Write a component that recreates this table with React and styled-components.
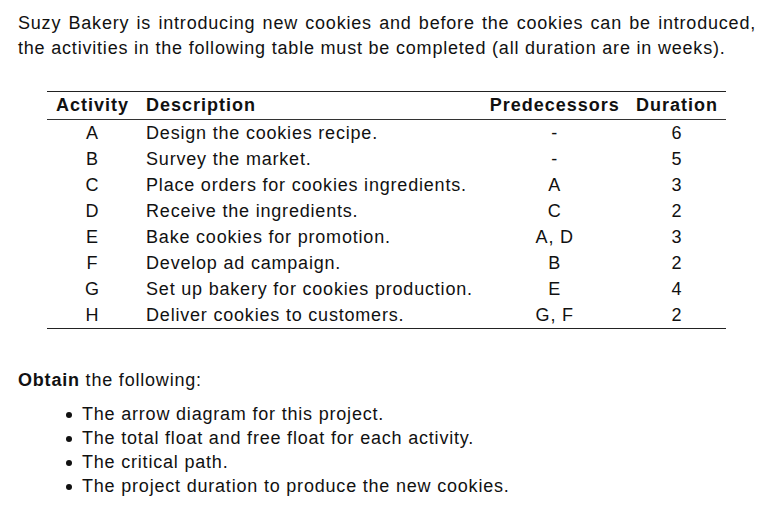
import React from 'react';
import styled, { createGlobalStyle } from 'styled-components';

const GlobalStyle = createGlobalStyle`
  body {
    margin: 0;
    background: #fff;
    color: #111;
    font-family: 'Liberation Sans', Arial, sans-serif;
  }
`;

const Page = styled.div`
  width: 766px;
  padding: 11px 0 0 18px;
  box-sizing: border-box;
  font-size: 18px;
  letter-spacing: 0.8px;
`;

const Intro = styled.div`
  width: 738px;
  line-height: 25px;
`;

const Line = styled.div`
  text-align: ${(p) => (p.$justify ? 'justify' : 'left')};
  text-align-last: ${(p) => (p.$justify ? 'justify' : 'left')};
`;

const Table = styled.table`
  margin: 30px 0 0 29px;
  width: 679px;
  border-collapse: collapse;
  border-top: 1.5px solid #222;
  border-bottom: 1.5px solid #222;
`;

const Head = styled.th`
  height: 27px;
  padding: 0 ${(p) => (p.$pad ? p.$pad : 8)}px;
  text-align: ${(p) => p.$align || 'left'};
  font-weight: bold;
  letter-spacing: 1px;
  border-bottom: 1px solid #333;
  white-space: nowrap;
`;

const Cell = styled.td`
  height: 26px;
  padding: 0 8px;
  text-align: ${(p) => p.$align || 'center'};
  white-space: nowrap;
`;

const Obtain = styled.p`
  margin: 39px 0 0 0;
  line-height: 25px;
`;

const List = styled.ul`
  margin: 9px 0 0 0;
  padding-left: 64px;
  list-style: none;
`;

const Item = styled.li`
  position: relative;
  line-height: 24px;
  &::before {
    content: '';
    position: absolute;
    left: -16px;
    top: 10px;
    width: 6px;
    height: 6px;
    border-radius: 50%;
    background: #111;
  }
`;

const rows = [
  ['A', 'Design the cookies recipe.', '-', 6],
  ['B', 'Survey the market.', '-', 5],
  ['C', 'Place orders for cookies ingredients.', 'A', 3],
  ['D', 'Receive the ingredients.', 'C', 2],
  ['E', 'Bake cookies for promotion.', 'A, D', 3],
  ['F', 'Develop ad campaign.', 'B', 2],
  ['G', 'Set up bakery for cookies production.', 'E', 4],
  ['H', 'Deliver cookies to customers.', 'G, F', 2],
];

export default function App() {
  return (
    <Page>
      <GlobalStyle />
      <Intro>
        <Line $justify>
          Suzy Bakery is introducing new cookies and before the cookies can be introduced,
        </Line>
        <Line>
          the activities in the following table must be completed (all duration are in weeks).
        </Line>
      </Intro>
      <Table>
        <colgroup>
          <col style={{ width: 90 }} />
          <col style={{ width: 344 }} />
          <col style={{ width: 147 }} />
          <col style={{ width: 98 }} />
        </colgroup>
        <thead>
          <tr>
            <Head $pad={9}>Activity</Head>
            <Head>Description</Head>
            <Head $align="center">Predecessors</Head>
            <Head $align="center">Duration</Head>
          </tr>
        </thead>
        <tbody>
          {rows.map(([act, desc, pred, dur]) => (
            <tr key={act}>
              <Cell>{act}</Cell>
              <Cell $align="left">{desc}</Cell>
              <Cell>{pred}</Cell>
              <Cell>{dur}</Cell>
            </tr>
          ))}
        </tbody>
      </Table>
      <Obtain>
        <b>Obtain</b> the following:
      </Obtain>
      <List>
        <Item>The arrow diagram for this project.</Item>
        <Item>The total float and free float for each activity.</Item>
        <Item>The critical path.</Item>
        <Item>The project duration to produce the new cookies.</Item>
      </List>
    </Page>
  );
}
